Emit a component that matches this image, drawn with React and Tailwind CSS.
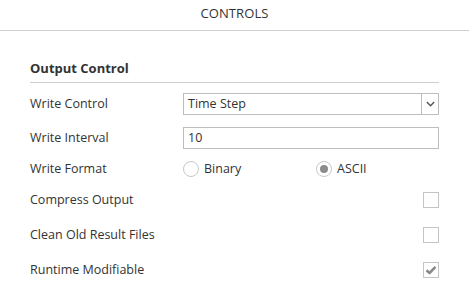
import React from "react";

const font = { fontFamily: '"Open Sans", "Noto Sans", sans-serif' };

function Checkbox({ checked }) {
  return (
    <div className="w-[16px] h-[16px] border border-[#c4c4c4] bg-white flex items-center justify-center">
      {checked && (
        <svg width="12" height="10" viewBox="0 0 12 10">
          <path d="M1.5 5.2 L4.5 8 L10.5 1.8" fill="none" stroke="#8a8a8a" strokeWidth="2.6" strokeLinejoin="round" />
        </svg>
      )}
    </div>
  );
}

function Radio({ checked }) {
  return (
    <div className="w-[16px] h-[16px] rounded-full border border-[#c8c8c8] bg-white flex items-center justify-center">
      {checked && <div className="w-[8px] h-[8px] rounded-full bg-[#8c8c8c]" />}
    </div>
  );
}

export default function App() {
  return (
    <div className="w-[469px] h-[308px] bg-white text-[12.5px] text-[#333333]" style={font}>
      <div className="h-[31px] border-b border-[#cfcfcf] flex items-center justify-center text-[13px] text-[#333] tracking-[0.1px]">
        <span className="-mt-[2px]">CONTROLS</span>
      </div>
      <div className="px-[30px]">
        <div className="pt-[28px] pb-[4px] leading-[19px] border-b border-[#cfcfcf] font-bold text-[13px] text-[#333]">
          Output Control
        </div>
        <div className="mt-[10px] h-[22px] flex items-center">
          <div className="w-[153px]">Write Control</div>
          <div className="flex-1 h-[22px] border border-[#bdbdbd] flex">
            <div className="flex-1 pl-[4px] flex items-center leading-none">Time Step</div>
            <div className="w-[17px] border-l border-[#bdbdbd] flex items-center justify-center">
              <svg width="9" height="6" viewBox="0 0 9 6">
                <path d="M0.8 1 L4.5 4.8 L8.2 1" fill="none" stroke="#555" strokeWidth="1.4" />
              </svg>
            </div>
          </div>
        </div>
        <div className="mt-[12px] h-[22px] flex items-center">
          <div className="w-[153px]">Write Interval</div>
          <div className="flex-1 h-[22px] border border-[#bdbdbd] pl-[4px] flex items-center">10</div>
        </div>
        <div className="mt-[12px] h-[16px] flex items-center">
          <div className="w-[153px]">Write Format</div>
          <div className="flex-1 flex items-center">
            <div className="w-[133px] flex items-center gap-[5px]">
              <Radio />
              <span>Binary</span>
            </div>
            <div className="flex items-center gap-[5px]">
              <Radio checked />
              <span>ASCII</span>
            </div>
          </div>
        </div>
        <div className="mt-[15px] h-[16px] flex items-center justify-between">
          <div>Compress Output</div>
          <Checkbox />
        </div>
        <div className="mt-[19px] h-[16px] flex items-center justify-between">
          <div>Clean Old Result Files</div>
          <Checkbox />
        </div>
        <div className="mt-[19px] h-[16px] flex items-center justify-between">
          <div>Runtime Modifiable</div>
          <Checkbox checked />
        </div>
      </div>
    </div>
  );
}
